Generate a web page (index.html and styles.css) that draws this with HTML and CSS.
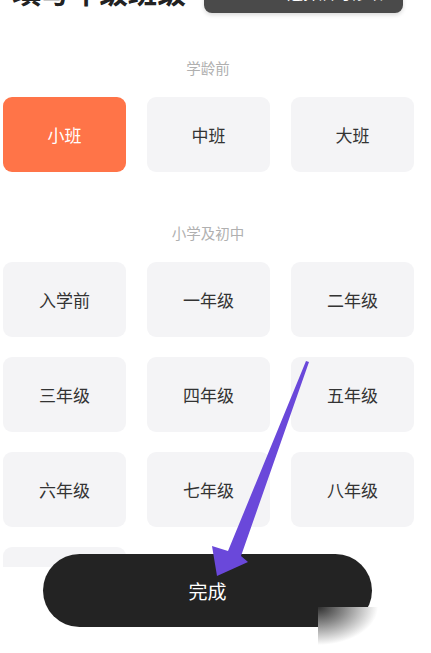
FILE: index.html
```html
<!DOCTYPE html>
<html lang="zh">
<head>
  <meta charset="UTF-8" />
  <meta name="viewport" content="width=device-width, initial-scale=1.0" />
  <title>填写年级班级</title>
  <link rel="stylesheet" href="styles.css">
</head>
<body>
  <div class="page">
    <div class="scroll">
      <div class="header">
        <h1 class="title">填写年级班级</h1>
        <div class="toast">10:05 · 选择后可修改</div>
      </div>

      <div class="section">
        <div class="section-label">学龄前</div>
        <div class="grid">
          <div class="card active">小班</div>
          <div class="card">中班</div>
          <div class="card">大班</div>
        </div>
      </div>

      <div class="section second">
        <div class="section-label">小学及初中</div>
        <div class="grid">
          <div class="card">入学前</div>
          <div class="card">一年级</div>
          <div class="card">二年级</div>
          <div class="card">三年级</div>
          <div class="card">四年级</div>
          <div class="card">五年级</div>
          <div class="card">六年级</div>
          <div class="card">七年级</div>
          <div class="card">八年级</div>
          <div class="card">九年级</div>
        </div>
      </div>
    </div>

    <div class="footer">
      <button class="done">完成</button>
    </div>

    <svg class="arrow" width="431" height="653" viewBox="0 0 431 653">
      <polygon points="306,361 309,362 241,556 248,562 217,576 212,546 228,551" fill="#6a48da" />
    </svg>
    <div class="blur-patch"></div>
  </div>
</body>
</html>
```

FILE: styles.css
```css
body {
  margin: 0;
  background: #fff;
  font-family: "Noto Sans CJK SC", "Noto Sans", sans-serif;
}
.page {
  position: relative;
  width: 431px;
  height: 653px;
  overflow: hidden;
}
.scroll {
  height: 567px;
  overflow: hidden;
}
.header {
  display: flex;
  align-items: flex-end;
  height: 41px;
  margin-top: -28px;
}
.title {
  margin: 0 0 4px 12px;
  font-size: 29px;
  line-height: 36px;
  font-weight: bold;
  color: #222;
  white-space: nowrap;
}
.toast {
  margin-left: 18px;
  width: 199px;
  height: 41px;
  box-sizing: border-box;
  padding-top: 8px;
  background: #4a4a4a;
  border-radius: 8px;
  box-shadow: 0 2px 4px rgba(0,0,0,0.15);
  color: #fff;
  font-size: 16px;
  line-height: 24px;
  text-align: center;
}
.section {
  margin-top: 45px;
  padding: 0 18px 0 3px;
}
.section.second {
  margin-top: 51px;
}
.section-label {
  text-align: center;
  font-size: 14.5px;
  line-height: 20px;
  color: #b0b0b0;
  margin-bottom: 19px;
}
.grid {
  display: grid;
  grid-template-columns: repeat(3, 123px);
  column-gap: 21px;
  row-gap: 20px;
}
.card {
  height: 75px;
  border-radius: 9px;
  background: #f4f4f6;
  display: flex;
  align-items: center;
  justify-content: center;
  font-size: 17px;
  color: #333;
}
.card.active {
  background: #ff7448;
  color: #fff;
}
.footer {
  position: relative;
  margin-top: -13px;
  padding-left: 43px;
}
.done {
  width: 329px;
  height: 73px;
  border: none;
  border-radius: 37px;
  background: #232323;
  color: #fff;
  font-family: "Noto Sans CJK SC", sans-serif;
  font-size: 19px;
}
.arrow {
  position: absolute;
  left: 0;
  top: 0;
}
.blur-patch {
  position: absolute;
  left: 318px;
  top: 607px;
  width: 113px;
  height: 46px;
  background: radial-gradient(ellipse 60px 38px at 0 0, rgba(35,35,35,0.95) 0%, rgba(60,60,60,0.6) 45%, rgba(255,255,255,0) 100%), #fff;
}
```
